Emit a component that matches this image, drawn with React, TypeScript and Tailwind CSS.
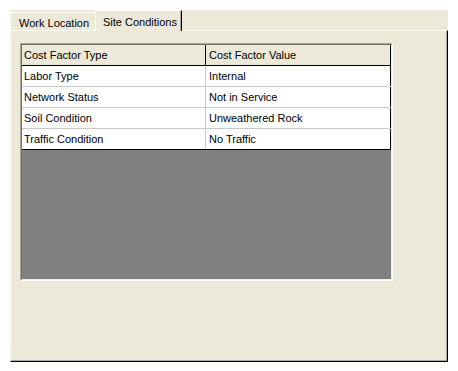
import React from "react";

const rows: [string, string][] = [
  ["Labor Type", "Internal"],
  ["Network Status", "Not in Service"],
  ["Soil Condition", "Unweathered Rock"],
  ["Traffic Condition", "No Traffic"],
];

export default function App() {
  return (
    <div
      className="w-[458px] h-[371px] bg-white pl-[10px] pt-[10px] text-[11px] text-black"
      style={{ fontFamily: '"Liberation Sans", Arial, sans-serif' }}
    >
      <div className="w-[438px] h-[352px] bg-[#ECE9D8] flex flex-col">
        {/* tab strip */}
        <div className="h-[20px] flex items-end">
          <div className="h-[18px] w-[85px] border-l border-t border-white flex items-center pl-[8px] pt-[3px] leading-none">
            Work Location
          </div>
          <div className="relative z-10 h-[21px] -mb-[1px] w-[87px] bg-[#ECE9D8] border-l border-t border-white border-r border-r-black flex">
            <div className="flex-1 border-r border-[#ACA899] flex items-center pl-[7px] pt-[2px] leading-none">
              Site Conditions
            </div>
          </div>
        </div>
        {/* panel */}
        <div className="flex-1 border-t border-l border-t-white border-l-white border-r border-b border-r-black border-b-black flex">
          <div className="flex-1 border-r border-b border-[#ACA899] pl-[9px] pt-[12px]">
            {/* grid */}
            <div className="w-[373px] h-[238px] border-t border-l border-t-[#ACA899] border-l-[#ACA899] border-r border-b border-r-white border-b-white">
              <div className="w-full h-full border-t border-l border-t-[#716F64] border-l-[#716F64] border-r border-b border-r-[#F1EFE2] border-b-[#F1EFE2] bg-[#808080] flex flex-col">
                <div className="flex h-[21px] bg-[#ECE9D8] border-b border-black">
                  <div className="w-[184px] border-r border-black pl-[2px] flex items-center">
                    Cost Factor Type
                  </div>
                  <div className="w-[185px] border-r border-black pl-[3px] flex items-center">
                    Cost Factor Value
                  </div>
                </div>
                {rows.map(([a, b], i) => (
                  <div
                    key={a}
                    className={
                      i === rows.length - 1
                        ? "flex h-[21px] bg-white border-b border-black"
                        : "flex h-[21px] bg-white border-b border-[#C8C8C8]"
                    }
                  >
                    <div className="w-[184px] border-r border-[#C8C8C8] pl-[2px] flex items-center">
                      {a}
                    </div>
                    <div className="w-[185px] border-r border-black pl-[3px] flex items-center">
                      {b}
                    </div>
                  </div>
                ))}
              </div>
            </div>
          </div>
        </div>
      </div>
    </div>
  );
}
